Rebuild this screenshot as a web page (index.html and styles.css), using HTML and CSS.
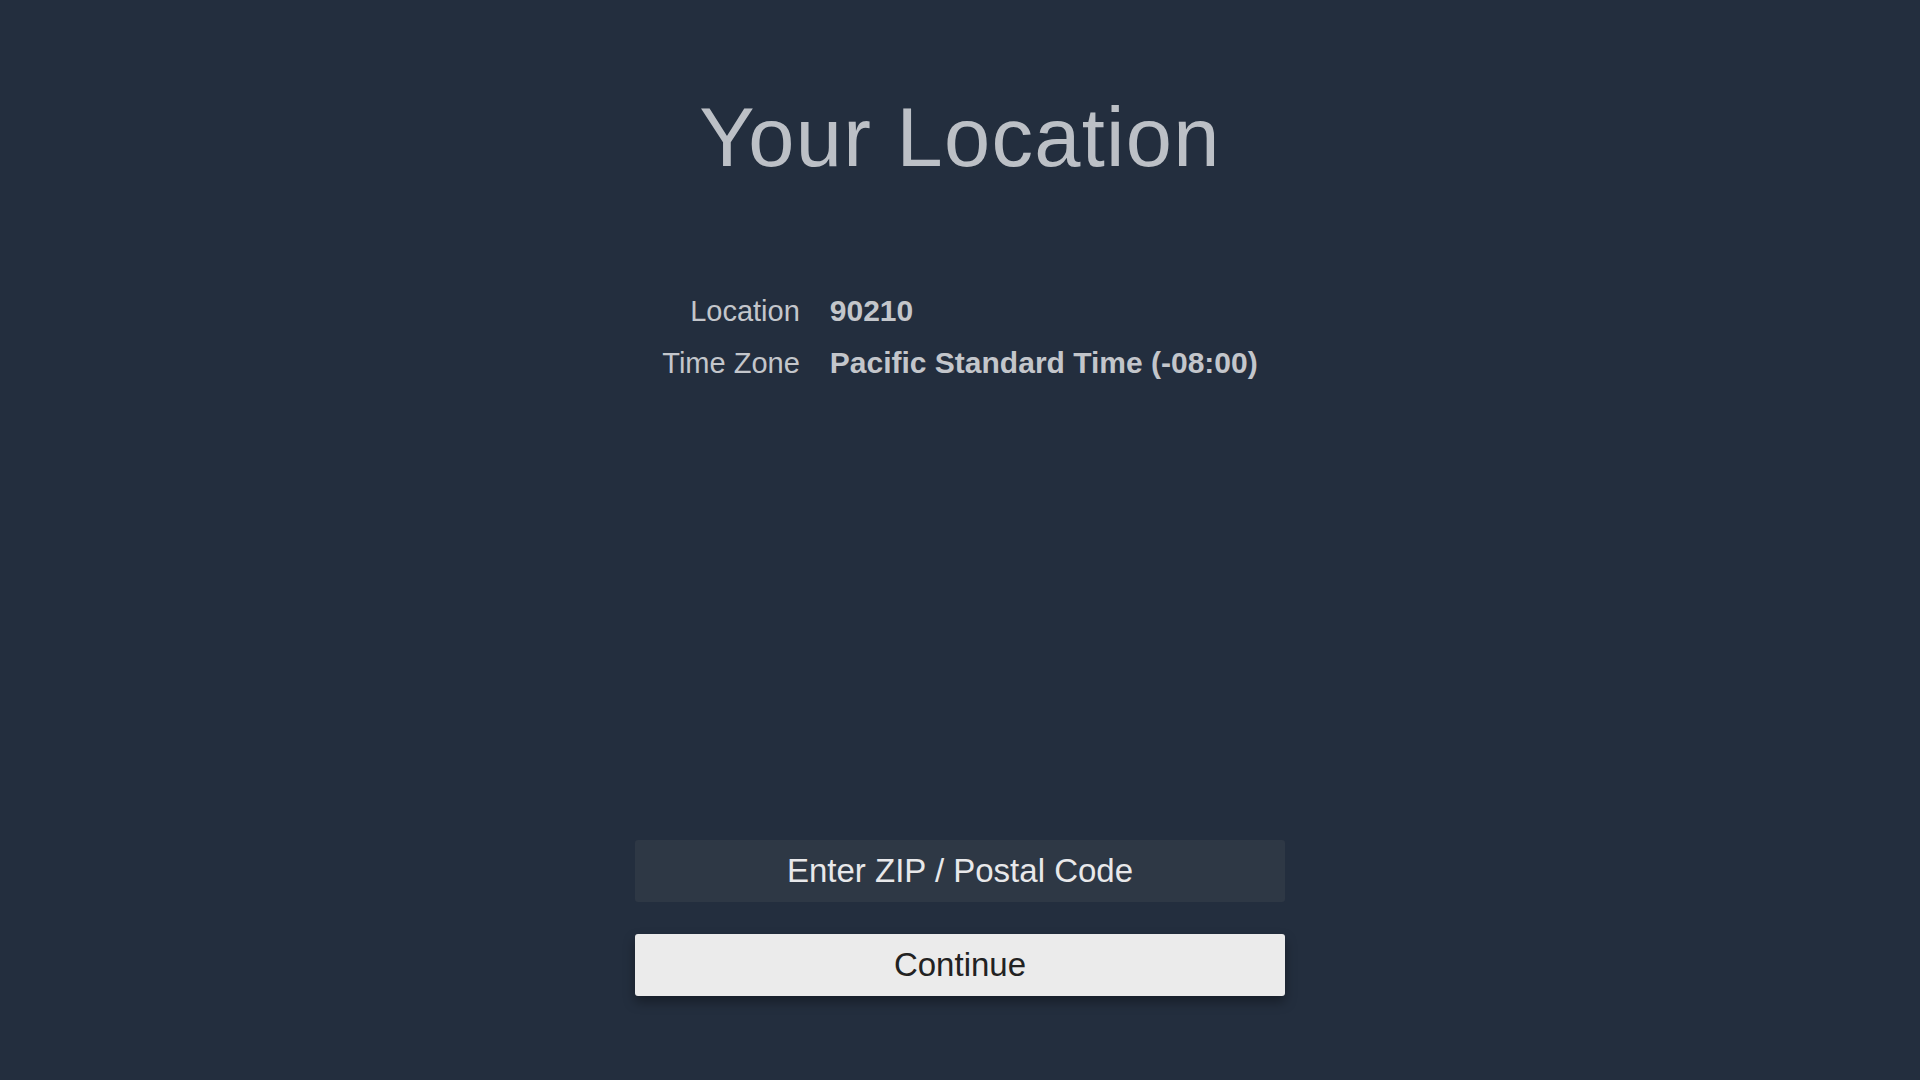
FILE: index.html
```html
<!DOCTYPE html>
<html lang="en">

<head>
<meta charset="UTF-8">
<meta name="viewport" content="width=device-width, initial-scale=1.0">
<title>Your Location</title>
<link rel="stylesheet" href="styles.css">
</head>

<body>
<div class="screen">
<h1 class="title">Your Location</h1>

<!-- current location details -->
<div class="details">
<div class="label">Location</div>
<div class="value">90210</div>
<div class="label">Time Zone</div>
<div class="value">Pacific Standard Time (-08:00)</div>
</div>

<div class="spacer"></div>

<!-- actions -->
<div class="actions">
<button class="btn btn-zip">Enter ZIP / Postal Code</button>
<button class="btn btn-continue">Continue</button>
</div>
</div>
</body>

</html>
```

FILE: styles.css
```css
html,
body {
margin: 0;
padding: 0;
}

body {
font-family: 'Liberation Sans', Arial, sans-serif;
background-color: #232e3e;
color: #bcc0c6;
}

.screen {
height: 1080px;
box-sizing: border-box;
padding: 88px 0 84px;
display: flex;
flex-direction: column;
align-items: center;
}

.title {
margin: 0;
font-size: 83px;
font-weight: normal;
line-height: 100px;
letter-spacing: 1.3px;
color: #bcc0c6;
}

.details {
margin-top: 97px;
display: grid;
grid-template-columns: auto auto;
column-gap: 30px;
font-size: 30px;
line-height: 52px;
}

.label {
text-align: right;
font-size: 29px;
color: #c3c6cb;
}

.value {
font-weight: bold;
color: #c3c6cb;
}

.spacer {
flex: 1;
}

.actions {
display: flex;
flex-direction: column;
gap: 32px;
width: 650px;
}

.btn {
height: 62px;
border: none;
border-radius: 3px;
font-family: inherit;
font-size: 33px;
padding: 0;
}

.btn-zip {
background-color: #2e3845;
color: #e8e8ea;
}

.btn-continue {
background-color: #ebebeb;
color: #222;
box-shadow: 0 6px 12px rgba(0, 0, 0, 0.35);
}
```
